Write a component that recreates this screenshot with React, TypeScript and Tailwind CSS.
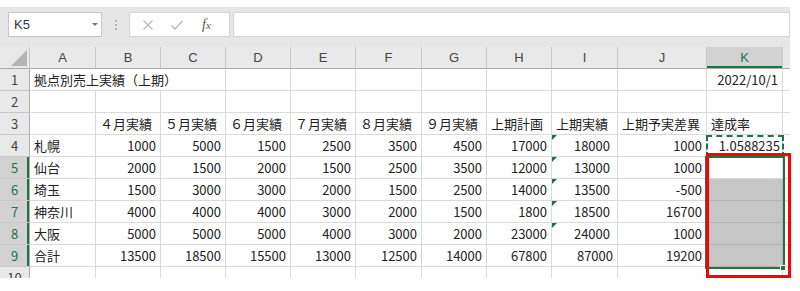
import React from "react";

const COLS = ["A", "B", "C", "D", "E", "F", "G", "H", "I", "J", "K"];

const data: (string | number)[][] = [
  ["札幌", 1000, 5000, 1500, 2500, 3500, 4500, 17000, 18000, 1000, "1.0588235"],
  ["仙台", 2000, 1500, 2000, 1500, 2500, 3500, 12000, 13000, 1000, ""],
  ["埼玉", 1500, 3000, 3000, 2000, 1500, 2500, 14000, 13500, -500, ""],
  ["神奈川", 4000, 4000, 4000, 3000, 2000, 1500, 1800, 18500, 16700, ""],
  ["大阪", 5000, 5000, 5000, 4000, 3000, 2000, 23000, 24000, 1000, ""],
  ["合計", 13500, 18500, 15500, 13000, 12500, 14000, 67800, 87000, 19200, ""],
];

const titles = ["４月実績", "５月実績", "６月実績", "７月実績", "８月実績", "９月実績", "上期計画", "上期実績", "上期予実差異"];

const font = { fontFamily: '"Noto Sans CJK JP", "Noto Sans", sans-serif' };

function RowHead({ n, active }: { n: number; active?: boolean }) {
  return (
    <div
      className={
        "h-[22px] flex items-center justify-center text-[13px] border-b border-r border-b-[#c8c8c8] border-r-[#ababab] " +
        (active
          ? "bg-[#d2d2d2] text-[#217346] shadow-[inset_-2px_0_0_#217346]"
          : "bg-[#e9e9e9] text-[#444]")
      }
    >
      {n}
    </div>
  );
}

function Cell({
  children,
  right,
  className = "",
}: {
  children?: React.ReactNode;
  right?: boolean;
  className?: string;
}) {
  return (
    <div
      className={
        "relative h-[22px] flex items-center whitespace-nowrap border-b border-r border-[#dadada] text-[13px] text-[#222] px-[4px] pt-[1px] " +
        (right ? "justify-end " : "") +
        className
      }
    >
      {children}
    </div>
  );
}

function Triangle() {
  return (
    <span className="absolute top-0 left-0 w-0 h-0 border-t-[5px] border-r-[5px] border-t-[#1e7145] border-r-transparent" />
  );
}

export default function App() {
  return (
    <div className="w-[800px] h-[291px] bg-white pt-[7px] overflow-hidden" style={font}>
      <div className="w-[790px]">
        {/* formula bar */}
        <div className="h-[40px] bg-[#e6e6e6] flex items-start pt-[5px] pl-[8px]">
          <div className="w-[94px] h-[25px] bg-white border border-[#c6c6c6] flex items-center justify-between pl-[5px] pr-[3px]">
            <span className="text-[13px] text-[#333]" style={{ fontFamily: '"Liberation Sans", sans-serif' }}>
              K5
            </span>
            <span className="w-0 h-0 border-l-[3px] border-r-[3px] border-t-[3px] border-l-transparent border-r-transparent border-t-[#777]" />
          </div>
          <div className="w-[27px] h-[25px] flex flex-col items-center justify-center gap-[2px]">
            <span className="w-[2px] h-[2px] bg-[#b4b4b4]" />
            <span className="w-[2px] h-[2px] bg-[#b4b4b4]" />
            <span className="w-[2px] h-[2px] bg-[#b4b4b4]" />
          </div>
          <div className="w-[101px] h-[25px] bg-white border border-[#d4d4d4] flex items-center pl-[12px] gap-[16px]">
            <svg width="12" height="12" viewBox="0 0 12 12">
              <path d="M1.5 1.5 L10.5 10.5 M10.5 1.5 L1.5 10.5" stroke="#b8b8b8" strokeWidth="1.2" fill="none" />
            </svg>
            <svg width="14" height="12" viewBox="0 0 14 12">
              <path d="M1.5 6.5 L5 10 L12.5 2" stroke="#b8b8b8" strokeWidth="1.3" fill="none" />
            </svg>
            <span
              className="text-[14px] italic text-[#555] ml-[2px]"
              style={{ fontFamily: '"Liberation Serif", serif' }}
            >
              f<span className="text-[11px]">x</span>
            </span>
          </div>
          <div className="flex-1 h-[25px] ml-[3px] bg-white border border-[#d4d4d4]" />
        </div>

        {/* sheet */}
        <div className="relative h-[231px] overflow-hidden">
          <div className="grid grid-cols-[30px_66px_65px_65px_65px_65px_66px_65px_65px_66px_89px_76px_7px]">
            {/* column headers */}
            <div className="h-[22px] bg-[#e9e9e9] border-b border-r border-b-[#ababab] border-r-[#c8c8c8] flex items-end justify-end pr-[2px] pb-[2px]">
              <span className="w-0 h-0 border-b-[16px] border-l-[16px] border-b-[#b4b4b4] border-l-transparent" />
            </div>
            {COLS.map((c) => (
              <div
                key={c}
                className={
                  "h-[22px] flex items-center justify-center text-[13px] border-b border-r border-b-[#ababab] border-r-[#c8c8c8] " +
                  (c === "K"
                    ? "bg-[#d2d2d2] text-[#217346] shadow-[inset_0_-2px_0_#217346]"
                    : "bg-[#e9e9e9] text-[#444]")
                }
                style={{ fontFamily: '"Liberation Sans", sans-serif' }}
              >
                {c}
              </div>
            ))}
            <div className="h-[22px] bg-[#e9e9e9] border-b border-b-[#ababab]" />

            {/* row 1 */}
            <RowHead n={1} />
            <Cell className="col-span-3">拠点別売上実績（上期）</Cell>
            {Array.from({ length: 7 }).map((_, i) => (
              <Cell key={i} />
            ))}
            <Cell right>2022/10/1</Cell>
            <Cell className="border-r-0" />

            {/* row 2 */}
            <RowHead n={2} />
            {Array.from({ length: 11 }).map((_, i) => (
              <Cell key={i} />
            ))}
            <Cell className="border-r-0" />

            {/* row 3 */}
            <RowHead n={3} />
            <Cell />
            {titles.map((t) => (
              <Cell key={t}>{t}</Cell>
            ))}
            <Cell>達成率</Cell>
            <Cell className="border-r-0" />

            {/* data rows */}
            {data.map((row, r) => {
              const n = r + 4;
              const selected = n >= 5;
              return (
                <React.Fragment key={n}>
                  <RowHead n={n} active={selected} />
                  {row.map((v, c) => {
                    if (c === 0) return <Cell key={c}>{v}</Cell>;
                    if (c === 10) {
                      return (
                        <Cell
                          key={c}
                          right
                          className={n >= 6 ? "bg-[#c6c6c6] border-b-[#b4b4b4] border-r-[#b4b4b4]" : "pr-[2px]"}
                        >
                          {v}
                        </Cell>
                      );
                    }
                    const flagged = c === 8 && n <= 8;
                    return (
                      <Cell key={c} right className={flagged ? "pr-[7px]" : ""}>
                        {flagged && <Triangle />}
                        {v}
                      </Cell>
                    );
                  })}
                  <Cell className="border-r-0" />
                </React.Fragment>
              );
            })}

            {/* row 10 */}
            <RowHead n={10} />
            {Array.from({ length: 11 }).map((_, i) => (
              <Cell key={i} />
            ))}
            <Cell className="border-r-0" />
          </div>

          {/* copy marquee on K4 */}
          <div className="absolute left-[706px] top-[88px] w-[78px] h-[23px] border-2 border-dashed border-[#217346]" />
          {/* selection K5:K9 */}
          <div className="absolute left-[705px] top-[109px] w-[80px] h-[113px] border-2 border-[#217346]" />
          <div className="absolute left-[780px] top-[218px] w-[6px] h-[6px] bg-[#217346] border border-white" />
        </div>
      </div>

      {/* red annotation */}
      <div className="absolute left-[706px] top-[153px] w-[85px] h-[125px] border-[3px] border-[#ff0000]" />
    </div>
  );
}
